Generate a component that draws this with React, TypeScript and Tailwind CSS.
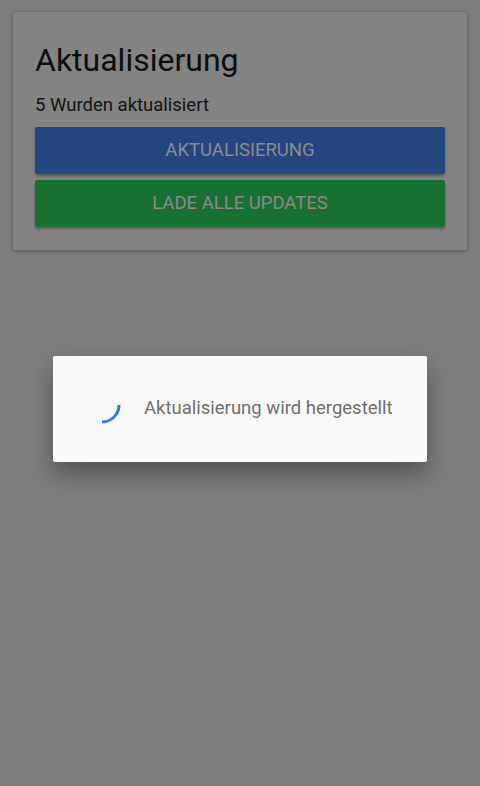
export default function App() {
  return (
    <div
      className="relative w-[480px] h-[786px] overflow-hidden bg-[#7e7e7e]"
      style={{ fontFamily: 'Roboto, "Noto Sans", sans-serif' }}
    >
      {/* Update card */}
      <div className="mx-[13px] mt-[12px] rounded-[3px] bg-[#838383] shadow-[0_1px_4px_rgba(0,0,0,0.35)] px-[22px] pt-[28px] pb-[23px]">
        <h1 className="text-[32px] leading-[40px] text-[#0d0d0d]">Aktualisierung</h1>
        <p className="mt-[14px] text-[18.5px] leading-[22px] text-[#141414]">5 Wurden aktualisiert</p>
        <div className="mt-[11px] flex flex-col gap-[6px]">
          <button className="h-[47px] w-full rounded-[2px] bg-[#23467f] text-[18.5px] text-[#8c8c8c] shadow-[0_2px_3px_rgba(0,0,0,0.3)]">
            AKTUALISIERUNG
          </button>
          <button className="h-[47px] w-full rounded-[2px] bg-[#177133] text-[18.5px] text-[#8a8a8a] shadow-[0_2px_3px_rgba(0,0,0,0.3)]">
            LADE ALLE UPDATES
          </button>
        </div>
      </div>

      {/* Progress dialog */}
      <div className="absolute left-[53px] top-[356px] w-[374px] h-[106px] rounded-[2px] bg-[#fafafa] shadow-[0_12px_24px_rgba(0,0,0,0.35)] flex items-center">
        <svg className="ml-[40px] w-[40px] h-[40px]" viewBox="0 0 40 40">
          <path d="M26 16 A17 17 0 0 1 9 33" fill="none" stroke="#2a7ef0" strokeWidth="3" strokeLinecap="butt" />
        </svg>
        <span className="ml-[11px] text-[18.5px] text-[#6e6e6e]">Aktualisierung wird hergestellt</span>
      </div>
    </div>
  );
}
